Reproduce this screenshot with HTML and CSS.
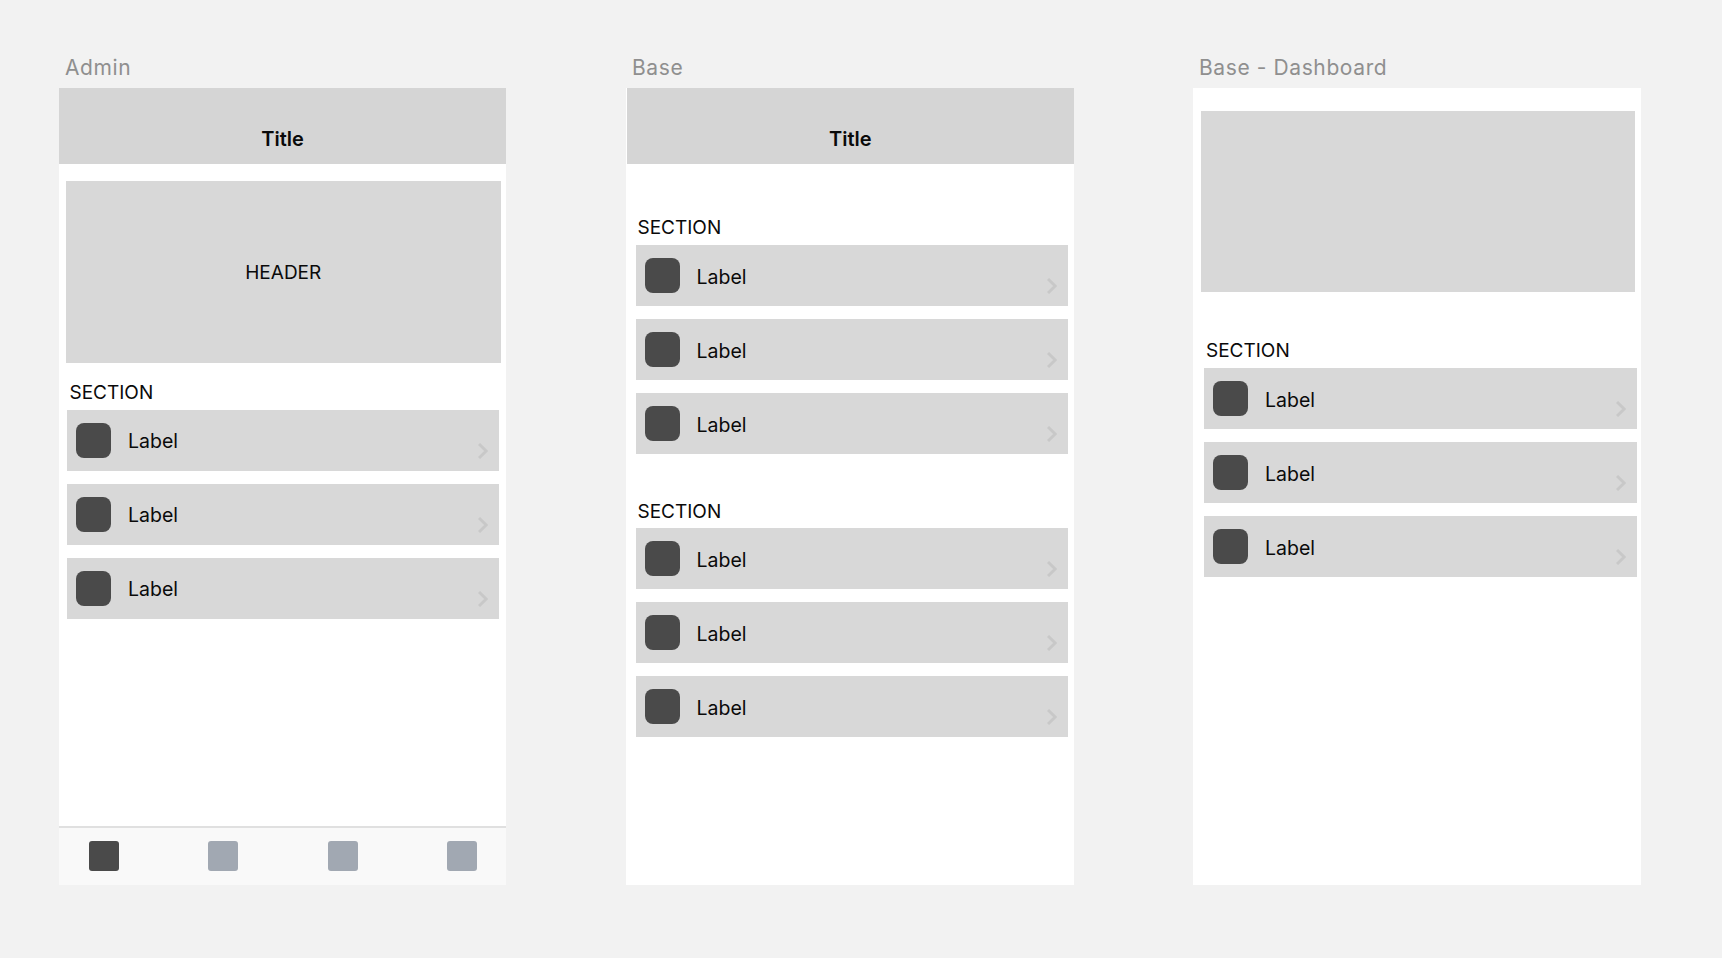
FILE: index.html
```html
<!DOCTYPE html>
<html lang="en">
<head>
    <meta charset="UTF-8">
    <meta name="viewport" content="width=device-width, initial-scale=1.0">
    <title>Wireframes</title>
    <link rel="stylesheet" href="styles.css">
</head>
<body>
    <svg class="defs" width="0" height="0">
        <symbol id="chevron" viewBox="0 0 10 16">
            <path d="M1 1 L8.2 8 L1 15" fill="none" stroke="#c8c8c8" stroke-width="3"/>
        </symbol>
    </svg>

    <div class="board">
        <!-- Admin -->
        <div class="artboard artboard-admin">
            <div class="artboard-name">Admin</div>
            <div class="screen">
                <div class="navbar">Title</div>
                <div class="banner banner-admin">HEADER</div>
                <div class="section-title section-admin">SECTION</div>
                <div class="rows rows-admin">
                    <div class="row"><span class="row-icon"></span><span class="row-label">Label</span><svg class="chevron"><use href="#chevron"/></svg></div>
                    <div class="row"><span class="row-icon"></span><span class="row-label">Label</span><svg class="chevron"><use href="#chevron"/></svg></div>
                    <div class="row"><span class="row-icon"></span><span class="row-label">Label</span><svg class="chevron"><use href="#chevron"/></svg></div>
                </div>
                <div class="tabbar">
                    <span class="tab tab-active"></span>
                    <span class="tab"></span>
                    <span class="tab"></span>
                    <span class="tab"></span>
                </div>
            </div>
        </div>

        <!-- Base -->
        <div class="artboard">
            <div class="artboard-name">Base</div>
            <div class="screen">
                <div class="navbar navbar-base">Title</div>
                <div class="section-title section-first">SECTION</div>
                <div class="rows rows-base">
                    <div class="row"><span class="row-icon"></span><span class="row-label">Label</span><svg class="chevron"><use href="#chevron"/></svg></div>
                    <div class="row"><span class="row-icon"></span><span class="row-label">Label</span><svg class="chevron"><use href="#chevron"/></svg></div>
                    <div class="row"><span class="row-icon"></span><span class="row-label">Label</span><svg class="chevron"><use href="#chevron"/></svg></div>
                </div>
                <div class="section-title section-second">SECTION</div>
                <div class="rows rows-base">
                    <div class="row"><span class="row-icon"></span><span class="row-label">Label</span><svg class="chevron"><use href="#chevron"/></svg></div>
                    <div class="row"><span class="row-icon"></span><span class="row-label">Label</span><svg class="chevron"><use href="#chevron"/></svg></div>
                    <div class="row"><span class="row-icon"></span><span class="row-label">Label</span><svg class="chevron"><use href="#chevron"/></svg></div>
                </div>
            </div>
        </div>

        <!-- Base - Dashboard -->
        <div class="artboard artboard-dashboard">
            <div class="artboard-name">Base - Dashboard</div>
            <div class="screen">
                <div class="banner banner-dashboard"></div>
                <div class="section-title section-dashboard">SECTION</div>
                <div class="rows rows-dashboard">
                    <div class="row"><span class="row-icon"></span><span class="row-label">Label</span><svg class="chevron"><use href="#chevron"/></svg></div>
                    <div class="row"><span class="row-icon"></span><span class="row-label">Label</span><svg class="chevron"><use href="#chevron"/></svg></div>
                    <div class="row"><span class="row-icon"></span><span class="row-label">Label</span><svg class="chevron"><use href="#chevron"/></svg></div>
                </div>
            </div>
        </div>
    </div>
</body>
</html>
```

FILE: styles.css
```css
html, body {
    margin: 0;
    height: 100%;
    overflow: hidden;
}
body {
    background-color: #f2f2f2;
    font-family: Inter, "Noto Sans", sans-serif;
    font-size: 20px;
    color: #0a0a0a;
}
.defs {
    display: block;
    height: 0;
}
.board {
    display: flex;
    gap: 119.5px;
    padding: 52px 0 0 59px;
}
.artboard {
    width: 447.5px;
}
.artboard-admin {
    width: 447px;
    margin-right: 0.5px;
}
.artboard-dashboard {
    width: 448px;
}
.artboard-name {
    box-sizing: border-box;
    height: 36px;
    line-height: 32px;
    padding-left: 6px;
    font-size: 21px;
    letter-spacing: 0.6px;
    color: #8f8f8f;
}
.screen {
    display: flex;
    flex-direction: column;
    height: 797px;
    background: white;
}
.navbar {
    display: flex;
    align-items: flex-end;
    justify-content: center;
    box-sizing: border-box;
    height: 76px;
    padding-bottom: 13px;
    line-height: 24px;
    font-weight: 600;
    background-color: #d5d5d5;
}
.navbar-base {
    margin-left: 1px;
}
.banner {
    display: flex;
    align-items: center;
    justify-content: center;
    height: 182px;
    font-size: 19px;
    background-color: #d8d8d8;
}
.banner-admin {
    margin: 17px 5.5px 0 7px;
}
.banner-dashboard {
    height: 181px;
    margin: 23px 6px 0 8px;
}
.section-title {
    line-height: 24px;
    font-size: 19px;
    margin-bottom: 4.5px;
}
.section-admin {
    margin-top: 18px;
    padding-left: 10.5px;
}
.section-first {
    margin-top: 52px;
    padding-left: 11.5px;
}
.section-second {
    margin-top: 46.5px;
    margin-bottom: 3.5px;
    padding-left: 11.5px;
}
.section-dashboard {
    margin-top: 46.5px;
    margin-bottom: 5px;
    padding-left: 13px;
}
.rows {
    display: flex;
    flex-direction: column;
    gap: 13px;
}
.rows-admin {
    margin: 0 7px 0 8px;
}
.rows-base {
    margin: 0 5.5px 0 9.5px;
}
.rows-dashboard {
    margin: 0 4px 0 11px;
}
.row {
    display: flex;
    align-items: center;
    gap: 17px;
    box-sizing: border-box;
    height: 61px;
    padding: 0 11px 0 9px;
    background-color: #d8d8d8;
}
.row-icon {
    width: 35px;
    height: 35px;
    border-radius: 8px;
    background-color: #4a4a4a;
}
.row-label {
    padding-top: 2.6px;
    font-size: 19.5px;
}
.rows-base .row-label,
.rows-dashboard .row-label {
    padding-top: 3.6px;
}
.chevron {
    width: 10px;
    height: 16px;
    margin-left: auto;
    margin-top: 22px;
}
.tabbar {
    display: flex;
    align-items: center;
    justify-content: space-between;
    box-sizing: border-box;
    height: 59px;
    margin-top: auto;
    padding: 0 29px 1.5px 29.5px;
    border-top: 2px solid #e0e0e0;
    background-color: #f9f9f9;
}
.tab {
    width: 30px;
    height: 30px;
    border-radius: 3px;
    background-color: #a1a8b2;
}
.tab-active {
    background-color: #4a4a4a;
}
```
